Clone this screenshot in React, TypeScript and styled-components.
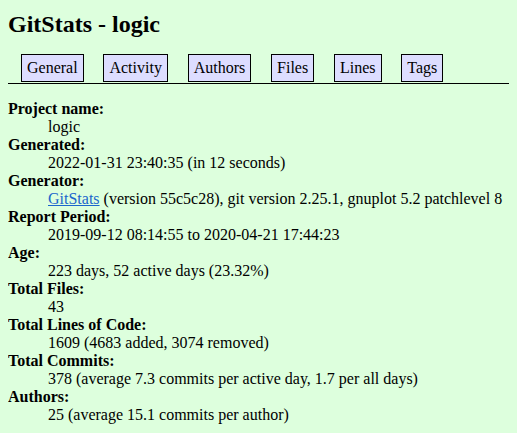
import React from "react";
import styled, { createGlobalStyle } from "styled-components";

const GlobalStyle = createGlobalStyle`
  body {
    margin: 8px;
    background: #ddffdd;
    color: #000;
    font-family: "Liberation Serif", "Times New Roman", serif;
    font-size: 16px;
    line-height: 18px;
  }
`;

const Title = styled.h1`
  font-size: 24px;
  line-height: 28px;
  font-weight: bold;
  margin: 2px 0 0;
`;

const Nav = styled.nav`
  display: flex;
  align-items: flex-end;
  gap: 19.8px;
  margin-top: 16px;
  padding-left: 13px;
  border-bottom: 1px solid #000;
  padding-bottom: 1px;
`;

const Tab = styled.a`
  display: block;
  border: 1px solid #000;
  background: #ddddff;
  color: #000;
  text-decoration: none;
  padding: 4px 5px;
`;

const List = styled.dl`
  margin: 16px 0 0;
`;

const Term = styled.dt`
  font-weight: bold;
`;

const Desc = styled.dd`
  margin-left: 40px;
`;

const Link = styled.a`
  color: #1a66cc;
  text-decoration: underline;
`;

const tabs = ["General", "Activity", "Authors", "Files", "Lines", "Tags"];

const items: { term: string; desc: React.ReactNode }[] = [
  { term: "Project name", desc: "logic" },
  { term: "Generated", desc: "2022-01-31 23:40:35 (in 12 seconds)" },
  {
    term: "Generator",
    desc: (
      <>
        <Link href="#">GitStats</Link> (version 55c5c28), git version 2.25.1, gnuplot 5.2 patchlevel 8
      </>
    ),
  },
  { term: "Report Period", desc: "2019-09-12 08:14:55 to 2020-04-21 17:44:23" },
  { term: "Age", desc: "223 days, 52 active days (23.32%)" },
  { term: "Total Files", desc: "43" },
  { term: "Total Lines of Code", desc: "1609 (4683 added, 3074 removed)" },
  { term: "Total Commits", desc: "378 (average 7.3 commits per active day, 1.7 per all days)" },
  { term: "Authors", desc: "25 (average 15.1 commits per author)" },
];

export default function App() {
  return (
    <>
      <GlobalStyle />
      <Title>GitStats - logic</Title>
      <Nav>
        {tabs.map((t) => (
          <Tab key={t} href="#">
            {t}
          </Tab>
        ))}
      </Nav>
      <List>
        {items.map((it) => (
          <React.Fragment key={it.term}>
            <Term>{it.term}:</Term>
            <Desc>{it.desc}</Desc>
          </React.Fragment>
        ))}
      </List>
    </>
  );
}
